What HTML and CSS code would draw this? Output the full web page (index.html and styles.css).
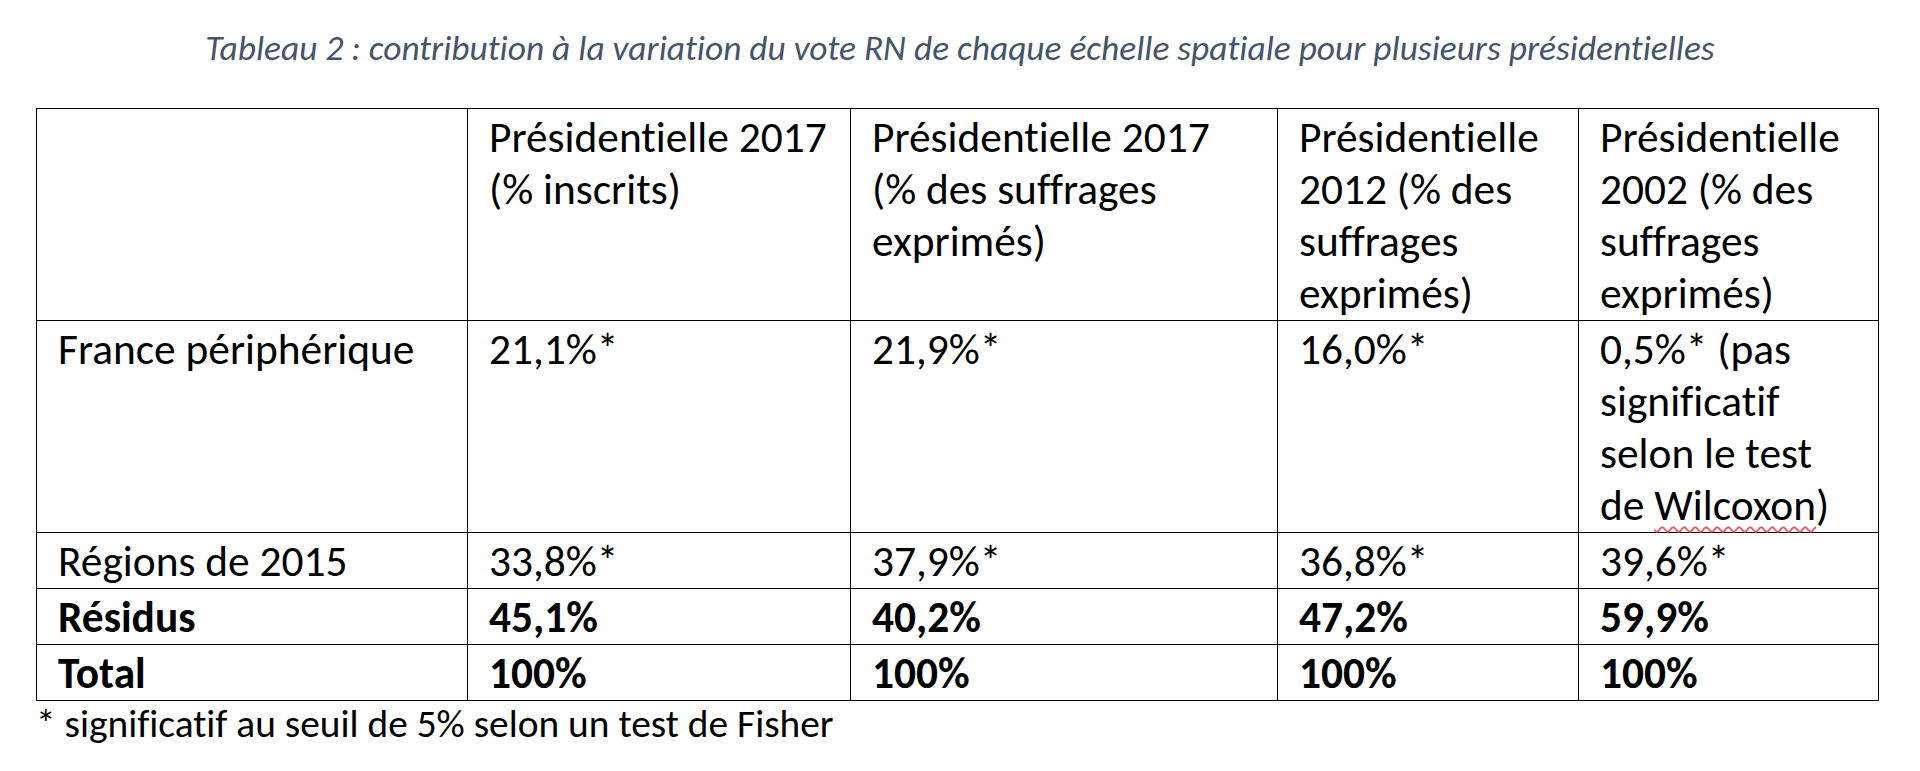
FILE: index.html
```html
<!DOCTYPE html>
<html lang="fr">
<head>
<meta charset="utf-8">
<title>Tableau 2</title>
<link rel="stylesheet" href="styles.css">
</head>
<body>
<div class="page">
  <p class="caption">Tableau 2 : contribution à la variation du vote RN de chaque échelle spatiale pour plusieurs présidentielles</p>
  <table class="data">
    <colgroup>
      <col class="c1"><col class="c2"><col class="c3"><col class="c4"><col class="c5">
    </colgroup>
    <tr class="row-head">
      <td></td>
      <td>Présidentielle 2017<br>(% inscrits)</td>
      <td>Présidentielle 2017<br>(% des suffrages<br>exprimés)</td>
      <td>Présidentielle<br>2012 (% des<br>suffrages<br>exprimés)</td>
      <td>Présidentielle<br>2002 (% des<br>suffrages<br>exprimés)</td>
    </tr>
    <tr>
      <td>France périphérique</td>
      <td>21,1%*</td>
      <td>21,9%*</td>
      <td>16,0%*</td>
      <td>0,5%* (pas<br>significatif<br>selon le test<br>de <span class="spell">Wilcoxon</span>)</td>
    </tr>
    <tr>
      <td>Régions de 2015</td>
      <td>33,8%*</td>
      <td>37,9%*</td>
      <td>36,8%*</td>
      <td>39,6%*</td>
    </tr>
    <tr class="bold">
      <td>Résidus</td>
      <td>45,1%</td>
      <td>40,2%</td>
      <td>47,2%</td>
      <td>59,9%</td>
    </tr>
    <tr class="bold">
      <td>Total</td>
      <td>100%</td>
      <td>100%</td>
      <td>100%</td>
      <td>100%</td>
    </tr>
  </table>
  <p class="note">* significatif au seuil de 5% selon un test de Fisher</p>
</div>
</body>
</html>
```
FILE: styles.css
```css
html, body {
  margin: 0;
  padding: 0;
  background: #ffffff;
}
.page {
  width: 1920px;
  height: 771px;
  overflow: hidden;
  font-family: Carlito, Calibri, Lato, "Liberation Sans", sans-serif;
  font-variant-ligatures: none;
  color: #000000;
}
.caption {
  margin: 28px 0 0 0;
  height: 40px;
  line-height: 40px;
  font-size: 35.4px;
  font-style: italic;
  color: #44546a;
  text-align: center;
}
.data {
  margin: 40px 0 0 36px;
  border-collapse: collapse;
  table-layout: fixed;
  width: 1842px;
  font-size: 43.4px;
  line-height: 52px;
}
.c1 { width: 431px; }
.c2 { width: 383px; }
.c3 { width: 427px; }
.c4 { width: 301px; }
.c5 { width: 300px; }
.data td {
  border: 1px solid #000000;
  padding: 3px 21px 0 21px;
  vertical-align: top;
  white-space: nowrap;
}
.bold td {
  font-weight: bold;
}
.spell {
  text-decoration: underline wavy #e0606e;
  text-decoration-thickness: 1.5px;
  text-underline-offset: 6px;
}
.note {
  margin: 0 0 0 36px;
  font-size: 39.4px;
  line-height: 46px;
}
```
